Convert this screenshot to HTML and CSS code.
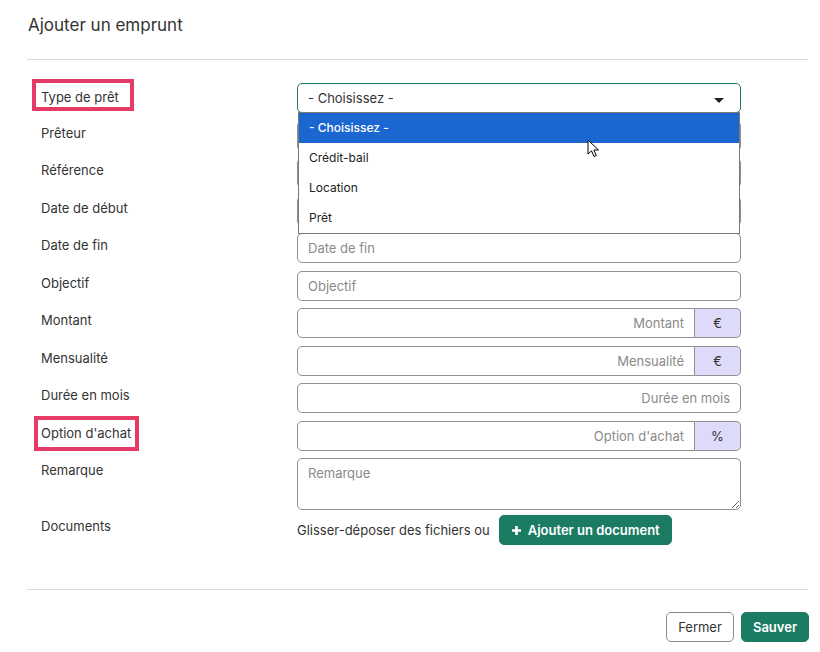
FILE: index.html
```html
<!DOCTYPE html>
<html lang="fr">

<head>
    <meta charset="UTF-8">
    <meta name="viewport" content="width=device-width, initial-scale=1.0">
    <title>Ajouter un emprunt</title>
    <link rel="stylesheet" href="styles.css">
</head>

<body>

    <div class="modal">
        <div class="modal-header">
            <h1 class="modal-title">Ajouter un emprunt</h1>
        </div>

        <div class="modal-body">
            <div class="form-row row-type">
                <label class="form-label"><span class="marked mark-type">Type de prêt</span></label>
                <div class="select-wrap">
                    <div class="select">
                        <span>- Choisissez -</span>
                        <span class="caret"></span>
                    </div>
                    <ul class="dropdown">
                        <li class="active">- Choisissez -</li>
                        <li>Crédit-bail</li>
                        <li>Location</li>
                        <li>Prêt</li>
                    </ul>
                    <svg class="cursor" width="13" height="20" viewBox="0 0 13 20">
                        <path d="M1 1 L1 15 L4.5 11.8 L7 17.5 L9.3 16.5 L6.9 11 L11.5 11 Z" fill="#fff" stroke="#000" stroke-width="1" stroke-linejoin="round" />
                    </svg>
                </div>
            </div>
            <div class="form-row">
                <label class="form-label">Prêteur</label>
                <input class="form-control" type="text" placeholder="Prêteur">
            </div>
            <div class="form-row">
                <label class="form-label">Référence</label>
                <input class="form-control" type="text" placeholder="Référence">
            </div>
            <div class="form-row">
                <label class="form-label">Date de début</label>
                <input class="form-control" type="text" placeholder="Date de début">
            </div>
            <div class="form-row">
                <label class="form-label">Date de fin</label>
                <input class="form-control" type="text" placeholder="Date de fin">
            </div>
            <div class="form-row">
                <label class="form-label">Objectif</label>
                <input class="form-control" type="text" placeholder="Objectif">
            </div>
            <div class="form-row">
                <label class="form-label">Montant</label>
                <div class="input-group">
                    <input class="form-control text-right" type="text" placeholder="Montant">
                    <span class="addon">€</span>
                </div>
            </div>
            <div class="form-row">
                <label class="form-label">Mensualité</label>
                <div class="input-group">
                    <input class="form-control text-right" type="text" placeholder="Mensualité">
                    <span class="addon">€</span>
                </div>
            </div>
            <div class="form-row">
                <label class="form-label">Durée en mois</label>
                <input class="form-control text-right" type="text" placeholder="Durée en mois">
            </div>
            <div class="form-row">
                <label class="form-label"><span class="marked mark-option">Option d'achat</span></label>
                <div class="input-group">
                    <input class="form-control text-right" type="text" placeholder="Option d'achat">
                    <span class="addon">%</span>
                </div>
            </div>
            <div class="form-row row-remark">
                <label class="form-label">Remarque</label>
                <textarea class="form-control textarea" placeholder="Remarque"></textarea>
            </div>
            <div class="form-row row-docs">
                <label class="form-label">Documents</label>
                <div class="docs">
                    <span>Glisser-déposer des fichiers ou</span>
                    <button class="btn btn-green btn-add">
                        <svg width="11" height="11" viewBox="0 0 11 11">
                            <path d="M5.5 1 V10 M1 5.5 H10" stroke="#fff" stroke-width="2.6" />
                        </svg>
                        Ajouter un document
                    </button>
                </div>
            </div>
        </div>

        <div class="modal-footer">
            <button class="btn btn-outline">Fermer</button>
            <button class="btn btn-green">Sauver</button>
        </div>
    </div>

</body>

</html>
```

FILE: styles.css
```css
body {
    font-family: Inter, "Noto Sans", sans-serif;
    margin: 0;
    padding: 0;
    background-color: #fff;
    color: #333;
}

.modal {
    width: 781px;
    margin-left: 27px;
}

.modal-header {
    height: 60px;
    border-bottom: 1px solid #d9d9d9;
    padding-top: 14px;
    box-sizing: border-box;
    padding-left: 1px;
}

.modal-title {
    margin: 0;
    font-size: 17px;
    font-weight: 400;
    line-height: 22px;
    color: #333;
}

.modal-body {
    padding: 23px 0 44px 14px;
    border-bottom: 1px solid #d9d9d9;
}

.form-row {
    display: flex;
    margin-bottom: 7.5px;
}

.form-row:last-child {
    margin-bottom: 0;
}

.row-remark {
    margin-bottom: 5px;
}

.form-label {
    width: 256px;
    flex-shrink: 0;
    font-size: 13px;
    line-height: 16px;
    padding-top: 4px;
    color: #333;
}

.row-type .form-label {
    padding-top: 6px;
}

.marked {
    position: relative;
}

/* annotation boxes round the labels */
.marked::after {
    content: "";
    position: absolute;
    border: 4px solid #e63a67;
}

.mark-type::after {
    left: -9px;
    right: -15px;
    top: -10px;
    bottom: -6px;
}

.mark-option::after {
    left: -7px;
    right: -8px;
    top: -9px;
    bottom: -10px;
}

.form-control {
    width: 444px;
    height: 30px;
    box-sizing: border-box;
    border: 1px solid #8f8f8f;
    border-radius: 5px;
    padding: 0 10px;
    font-family: inherit;
    font-size: 13px;
    color: #333;
    background-color: #fff;
    outline: none;
}

.form-control::placeholder {
    color: #8a8a8a;
}

.text-right {
    text-align: right;
}

.textarea {
    height: 52px;
    padding: 6px 10px;
    resize: vertical;
    display: block;
}

.input-group {
    display: flex;
    width: 444px;
}

.input-group .form-control {
    flex: 1;
    width: auto;
    border-top-right-radius: 0;
    border-bottom-right-radius: 0;
}

.addon {
    width: 46px;
    height: 30px;
    box-sizing: border-box;
    border: 1px solid #8f8f8f;
    border-left: none;
    border-radius: 0 5px 5px 0;
    background-color: #dedafa;
    display: flex;
    align-items: center;
    justify-content: center;
    font-size: 13px;
    color: #333;
}

.select-wrap {
    position: relative;
    width: 444px;
}

.select {
    height: 30px;
    box-sizing: border-box;
    border: 1px solid #1f7a60;
    border-radius: 5px;
    padding: 0 10px;
    display: flex;
    align-items: center;
    justify-content: space-between;
    font-size: 13px;
    color: #333;
}

.caret {
    width: 0;
    height: 0;
    border-left: 5px solid transparent;
    border-right: 5px solid transparent;
    border-top: 5px solid #222;
    margin-top: 5px;
    margin-right: 6px;
}

.dropdown {
    position: absolute;
    top: 29px;
    left: 1px;
    right: 1px;
    margin: 0;
    padding: 0;
    list-style: none;
    background-color: #fff;
    border: 1px solid #7a7a7a;
    z-index: 2;
}

.dropdown li {
    height: 30px;
    line-height: 30px;
    padding-left: 10px;
    font-size: 12px;
    color: #222;
}

.dropdown li.active {
    background-color: #1b66d1;
    color: #fff;
    font-weight: 500;
}

.cursor {
    position: absolute;
    left: 290px;
    top: 56px;
    z-index: 3;
}

.docs {
    display: flex;
    align-items: center;
    font-size: 13px;
    color: #333;
}

.btn {
    height: 30px;
    box-sizing: border-box;
    border-radius: 5px;
    font-family: inherit;
    font-size: 13px;
    padding: 0 12px;
    cursor: pointer;
}

.btn-green {
    background-color: #1b7b63;
    border: 1px solid #1b7b63;
    color: #fff;
    font-weight: 600;
}

.btn-outline {
    background-color: #fff;
    border: 1px solid #8a8a8a;
    color: #333;
}

.btn-add {
    margin-left: 9px;
    display: flex;
    align-items: center;
    gap: 6px;
    padding: 0 11px 0 11px;
}

.row-docs .form-label {
    padding-top: 3px;
}

.modal-footer {
    display: flex;
    justify-content: flex-end;
    gap: 7px;
    padding-top: 22px;
    margin-right: -1px;
}

.modal-footer .btn {
    width: 68px;
    padding: 0;
}
```
